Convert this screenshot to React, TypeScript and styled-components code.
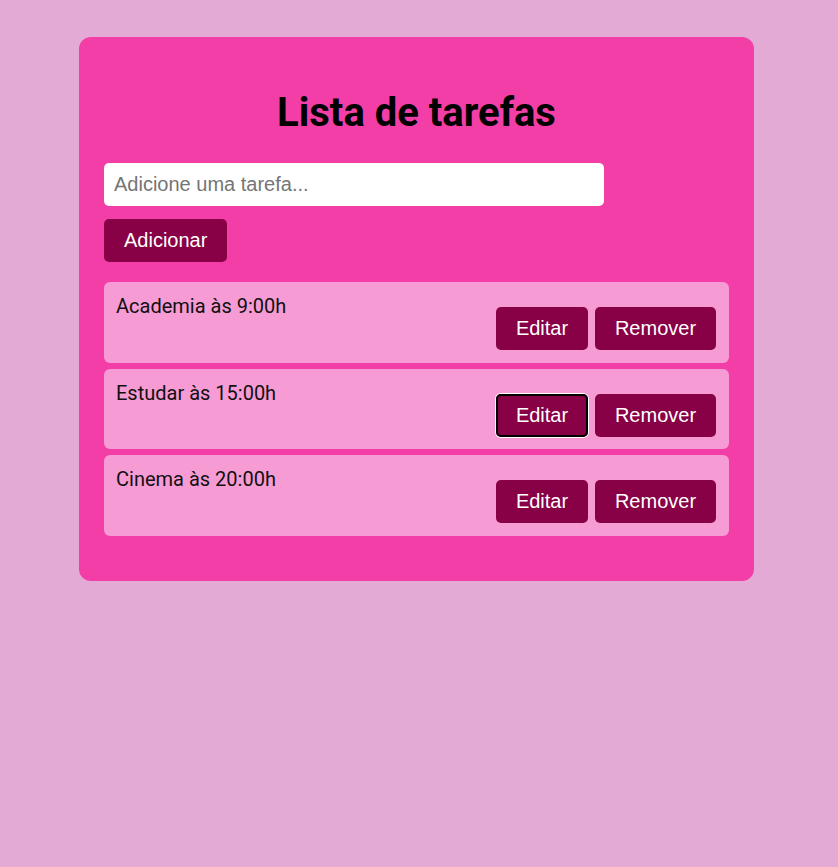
import React from "react";
import styled, { createGlobalStyle } from "styled-components";

const Global = createGlobalStyle`
  html, body {
    margin: 0;
    padding: 0;
    background: #e3aad5;
    min-height: 100%;
  }
  body {
    font-family: Roboto, "Noto Sans", sans-serif;
  }
`;

const Page = styled.div`
  padding: 37px 0 0 79px;
`;

const Card = styled.div`
  width: 675px;
  box-sizing: border-box;
  background: #f33ea8;
  border-radius: 12px;
  padding: 25px 25px 45px;
`;

const Title = styled.h1`
  margin: 27px 0 27px;
  text-align: center;
  font-family: Roboto, sans-serif;
  font-weight: 700;
  font-size: 40px;
  line-height: 47px;
  color: #000;
`;

const Input = styled.input`
  display: block;
  width: 500px;
  height: 43px;
  box-sizing: border-box;
  border: none;
  border-radius: 5px;
  background: #fff;
  padding: 0 10px;
  font-family: "Liberation Sans", Arial, sans-serif;
  font-size: 20px;
  color: #000;
  outline: none;
  &::placeholder {
    color: #757575;
  }
`;

const Button = styled.button<{ $focused?: boolean }>`
  height: 43px;
  box-sizing: border-box;
  border: none;
  border-radius: 5px;
  background: #880046;
  color: #fff;
  font-family: "Liberation Sans", Arial, sans-serif;
  font-size: 20px;
  padding: 0 20px;
  cursor: pointer;
  ${(p) =>
    p.$focused
      ? `outline: 2px solid #000; outline-offset: -2px; box-shadow: 0 0 0 1px #fff;`
      : ``}
`;

const AddButton = styled(Button)`
  margin-top: 13px;
  width: 123px;
`;

const List = styled.ul`
  list-style: none;
  margin: 20px 0 0;
  padding: 0;
  display: flex;
  flex-direction: column;
  gap: 6px;
`;

const Item = styled.li`
  display: flex;
  justify-content: space-between;
  align-items: flex-start;
  background: #f79bd4;
  border-radius: 6px;
  padding: 12px 13px 12px 12px;
  height: 80.5px;
  box-sizing: border-box;
`;

const TaskText = styled.span`
  font-family: Roboto, sans-serif;
  font-size: 20px;
  line-height: 24px;
  color: #111;
`;

const Actions = styled.div`
  display: flex;
  gap: 7px;
  margin-top: 13px;
`;

const EditButton = styled(Button)`
  width: 92px;
  padding: 0;
`;

const RemoveButton = styled(Button)`
  width: 121px;
  padding: 0;
`;

const tasks = ["Academia às 9:00h", "Estudar às 15:00h", "Cinema às 20:00h"];

export default function App() {
  return (
    <>
      <Global />
      <Page>
        <Card>
          <Title>Lista de tarefas</Title>
          <Input placeholder="Adicione uma tarefa..." />
          <AddButton>Adicionar</AddButton>
          <List>
            {tasks.map((t, i) => (
              <Item key={t}>
                <TaskText>{t}</TaskText>
                <Actions>
                  <EditButton $focused={i === 1}>Editar</EditButton>
                  <RemoveButton>Remover</RemoveButton>
                </Actions>
              </Item>
            ))}
          </List>
        </Card>
      </Page>
    </>
  );
}
